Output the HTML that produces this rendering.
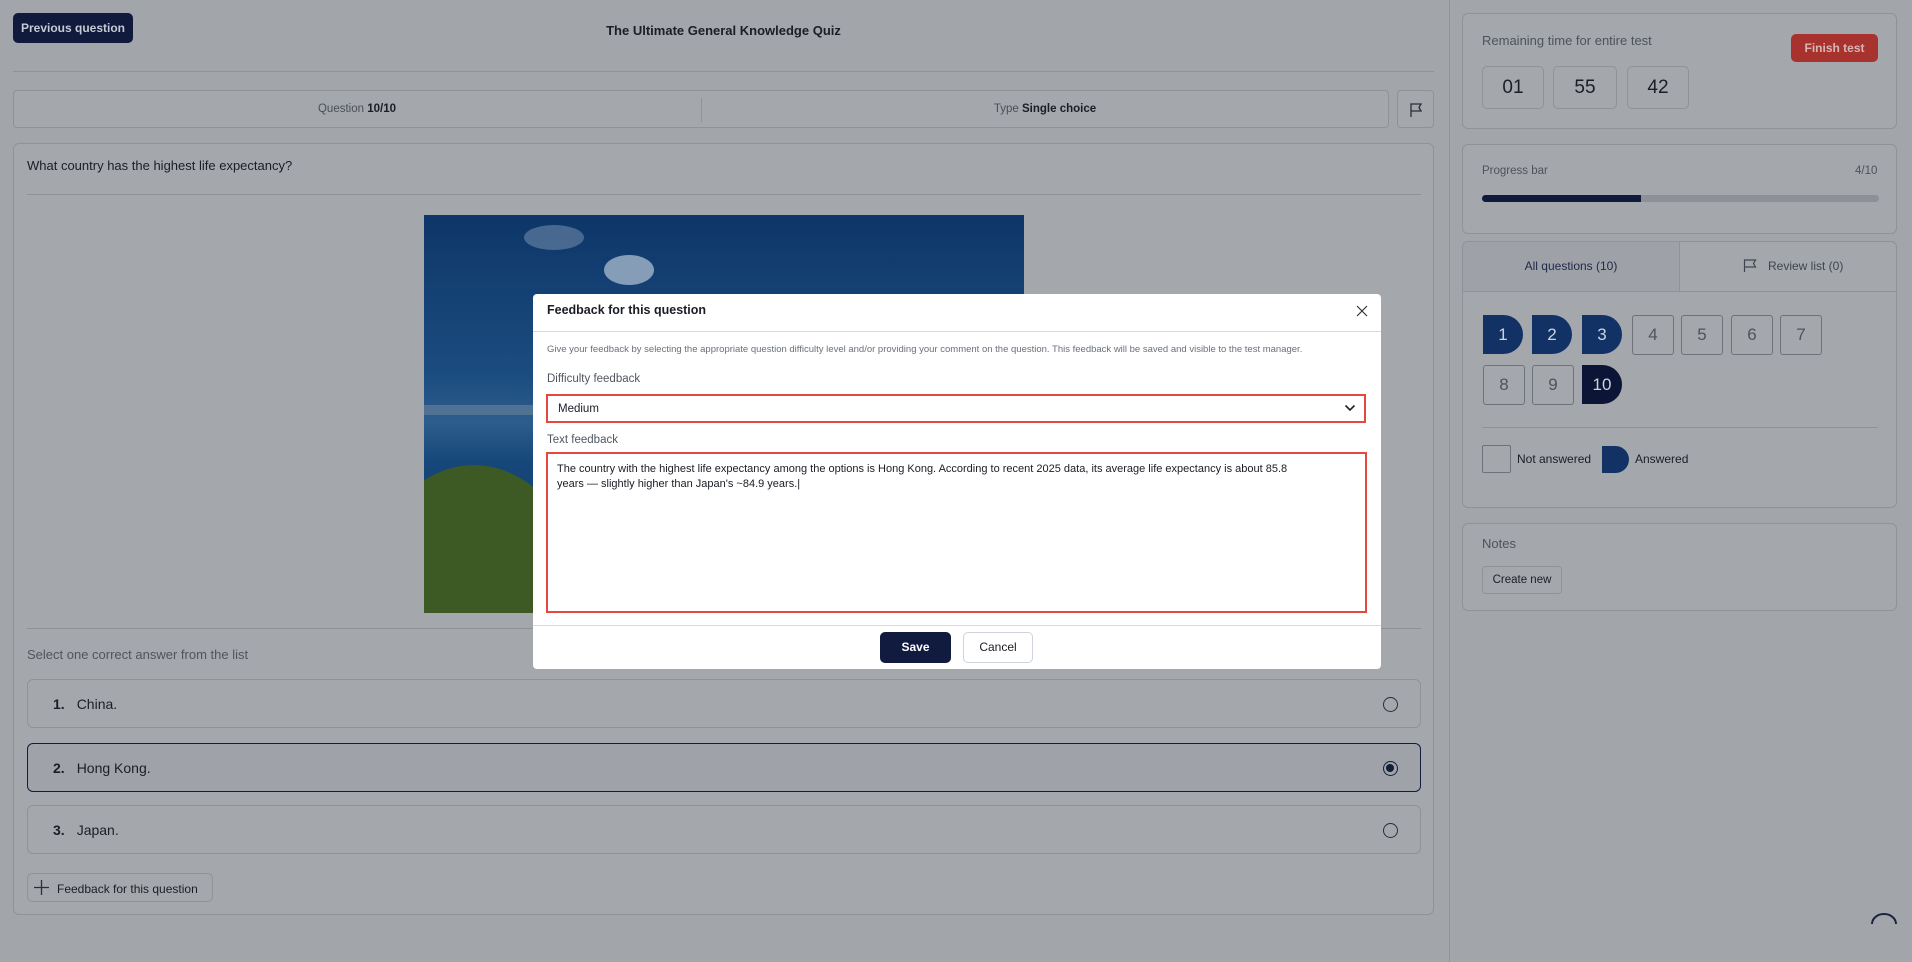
<!DOCTYPE html>
<html><head><meta charset="utf-8"><style>
*{box-sizing:border-box;margin:0;padding:0}
body{width:1912px;height:962px;background:#a2a5aa;font-family:"Liberation Sans",sans-serif;color:#1b1e25;position:relative;overflow:hidden}
.a{position:absolute}
.card{position:absolute;border:1px solid #8f9398;border-radius:6px;background:#a4a7ac}
.nb{position:absolute;width:42px;height:40px;font-size:17px;display:flex;align-items:center;justify-content:center}
.na{background:#123266;color:#cdd3de;border-radius:0 20px 20px 0}
.nn{border:1px solid #6e7279;border-radius:3px;color:#4e535b}
.opt{position:absolute;left:27px;width:1394px;height:49px;border:1px solid #8f9398;border-radius:6px;font-size:14px;padding:16px 0 0 25px}
.opt b{margin-right:12px}
.radio{position:absolute;right:22px;top:17px;width:15px;height:15px;border:1.5px solid #2a2e36;border-radius:50%}
</style></head><body>
<div class="a" style="left:13px;top:13px;width:120px;height:30px;background:#0f1a3d;border-radius:5px;color:#c6cad3;font-size:12px;font-weight:bold;line-height:30px;text-align:center">Previous question</div>
<div class="a" style="left:13px;width:1421px;top:23px;text-align:center;font-size:13px;font-weight:bold">The Ultimate General Knowledge Quiz</div>
<div class="a" style="left:13px;top:71px;width:1421px;height:1px;background:#8f9398"></div>
<div class="card" style="left:13px;top:90px;width:1376px;height:38px;border-radius:4px"></div>
<div class="a" style="left:701px;top:98px;width:1px;height:24px;background:#8f9398"></div>
<div class="a" style="left:13px;width:688px;top:103px;text-align:center;font-size:11.5px;color:#4a4f57">Question <b style="color:#1b1e25">10/10</b></div>
<div class="a" style="left:701px;width:688px;top:103px;text-align:center;font-size:11.5px;color:#4a4f57">Type <b style="color:#1b1e25">Single choice</b></div>
<div class="card" style="left:1397px;top:90px;width:37px;height:38px;border-radius:4px"><svg class="a" style="left:10px;top:11px" width="16" height="16" viewBox="0 0 16 16" fill="none" stroke="#2a2e36" stroke-width="1.3"><path d="M3 15V2h10l-2 3.5 2 3.5H3"/></svg></div>

<div class="card" style="left:13px;top:143px;width:1421px;height:772px"></div>
<div class="a" style="left:27px;top:158px;font-size:13px">What country has the highest life expectancy?</div>
<div class="a" style="left:27px;top:194px;width:1394px;height:1px;background:#8f9398"></div>
<div class="a" style="left:424px;top:215px;width:600px;height:398px;overflow:hidden;background:linear-gradient(180deg,#0e3668 0%,#1b4c80 40%,#2d5d8c 52%,#16477a 62%,#113a66 100%)">
 <div class="a" style="left:0;top:190px;width:120px;height:10px;background:#6a8299;opacity:.6"></div>
 <div class="a" style="left:-80px;top:250px;width:260px;height:400px;border-radius:60% 60% 0 0;background:#3d5a25"></div>
 <div class="a" style="left:100px;top:10px;width:60px;height:25px;border-radius:50%;background:#7f98b4;opacity:.5"></div>
 <div class="a" style="left:180px;top:40px;width:50px;height:30px;border-radius:50%;background:#b7c6d6;opacity:.7"></div>
</div>
<div class="a" style="left:27px;top:628px;width:1394px;height:1px;background:#8f9398"></div>
<div class="a" style="left:27px;top:647px;font-size:13px;color:#50555d">Select one correct answer from the list</div>
<div class="opt" style="top:679px"><b>1.</b>China.<div class="radio"></div></div>
<div class="opt" style="top:743px;border-color:#141d3a;background:#9fa2a8"><b>2.</b>Hong Kong.<div class="radio" style="border-color:#141d3a"><div style="margin:2px;width:8px;height:8px;border-radius:50%;background:#141d3a"></div></div></div>
<div class="opt" style="top:805px"><b>3.</b>Japan.<div class="radio"></div></div>
<div class="a" style="left:27px;top:873px;width:186px;height:29px;border:1px solid #8f9398;border-radius:5px;font-size:12px;padding:8px 0 0 29px">Feedback for this question<svg class="a" style="left:6px;top:6px" width="15" height="15" stroke="#2a2e36" stroke-width="1.3"><path d="M7.5 0v15M0 7.5h15"/></svg></div>

<div class="a" style="left:1449px;top:0;width:1px;height:962px;background:#8f9398"></div>

<div class="card" style="left:1462px;top:13px;width:435px;height:116px"></div>
<div class="a" style="left:1482px;top:33px;font-size:13px;color:#4e535b">Remaining time for entire test</div>
<div class="a" style="left:1791px;top:34px;width:87px;height:28px;background:#a8332e;border-radius:5px;color:#d9b6b4;font-size:12px;font-weight:bold;text-align:center;line-height:28px">Finish test</div>
<div class="a nn" style="left:1482px;top:66px;width:62px;height:43px;font-size:19px;border-color:#8f9398;border-radius:5px;text-align:center;line-height:41px;color:#1b1e25">01</div>
<div class="a nn" style="left:1553px;top:66px;width:64px;height:43px;font-size:19px;border-color:#8f9398;border-radius:5px;text-align:center;line-height:41px;color:#1b1e25">55</div>
<div class="a nn" style="left:1627px;top:66px;width:62px;height:43px;font-size:19px;border-color:#8f9398;border-radius:5px;text-align:center;line-height:41px;color:#1b1e25">42</div>

<div class="card" style="left:1462px;top:144px;width:435px;height:90px"></div>
<div class="a" style="left:1482px;top:165px;font-size:11.5px;color:#4e535b">Progress bar</div>
<div class="a" style="left:1855px;top:165px;font-size:11.5px;color:#4e535b">4/10</div>
<div class="a" style="left:1482px;top:195px;width:397px;height:7px;border-radius:4px;background:#8d9096"></div>
<div class="a" style="left:1482px;top:195px;width:159px;height:7px;border-radius:4px 0 0 4px;background:#0f1a3d"></div>

<div class="card" style="left:1462px;top:241px;width:435px;height:267px"></div>
<div class="a" style="left:1463px;top:242px;width:216px;height:49px;background:#9ea1a7;border-radius:6px 0 0 0"></div>
<div class="a" style="left:1462px;top:291px;width:435px;height:1px;background:#8f9398"></div>
<div class="a" style="left:1679px;top:241px;width:1px;height:50px;background:#8f9398"></div>
<div class="a" style="left:1463px;width:216px;top:259px;text-align:center;font-size:12px;color:#1e2a4a">All questions (10)</div>
<div class="a" style="left:1768px;top:259px;font-size:12px;color:#3f4550">Review list (0)</div>
<svg class="a" style="left:1743px;top:258px" width="14" height="14" fill="none" stroke="#3f4550" stroke-width="1.2"><path d="M1.5 14V2h11l-2 3.5 2 3.5h-11"/></svg>
<div class="nb na" style="left:1483px;top:315px;width:40px;height:39px">1</div>
<div class="nb na" style="left:1532px;top:315px;width:40px;height:39px">2</div>
<div class="nb na" style="left:1582px;top:315px;width:40px;height:39px">3</div>
<div class="nb nn" style="left:1632px;top:315px">4</div>
<div class="nb nn" style="left:1681px;top:315px">5</div>
<div class="nb nn" style="left:1731px;top:315px">6</div>
<div class="nb nn" style="left:1780px;top:315px">7</div>
<div class="nb nn" style="left:1483px;top:365px">8</div>
<div class="nb nn" style="left:1532px;top:365px">9</div>
<div class="nb na" style="left:1582px;top:365px;width:40px;height:39px;background:#0c1535">10</div>
<div class="a" style="left:1482px;top:427px;width:396px;height:1px;background:#8f9398"></div>
<div class="a nn" style="left:1482px;top:445px;width:29px;height:28px;border-radius:2px"></div>
<div class="a" style="left:1517px;top:452px;font-size:12px">Not answered</div>
<div class="a" style="left:1602px;top:446px;width:27px;height:27px;background:#123266;border-radius:0 14px 14px 0"></div>
<div class="a" style="left:1635px;top:452px;font-size:12px">Answered</div>

<div class="card" style="left:1462px;top:523px;width:435px;height:88px"></div>
<div class="a" style="left:1482px;top:536px;font-size:13px;color:#4e535b">Notes</div>
<div class="a" style="left:1482px;top:566px;width:80px;height:28px;border:1px solid #8f9398;border-radius:4px;font-size:11.5px;text-align:center;line-height:26px">Create new</div>
<svg class="a" style="left:1870px;top:912px" width="30" height="20" fill="none" stroke="#1b2440" stroke-width="2"><path d="M2 12a12 10 0 0 1 24 0"/></svg>

<!-- modal -->
<div class="a" style="left:533px;top:294px;width:848px;height:375px;background:#fff;border-radius:4px"></div>
<div class="a" style="left:547px;top:303px;font-size:12.5px;font-weight:bold;color:#1a1d24">Feedback for this question</div>
<svg class="a" style="left:1356px;top:305px" width="12" height="12" stroke="#333" stroke-width="1.2"><path d="M1 1l10 10M11 1L1 11"/></svg>
<div class="a" style="left:533px;top:331px;width:848px;height:1px;background:#d6dbe3"></div>
<div class="a" style="left:547px;top:344px;font-size:9.5px;color:#6a707a;white-space:nowrap">Give your feedback by selecting the appropriate question difficulty level and/or providing your comment on the question. This feedback will be saved and visible to the test manager.</div>
<div class="a" style="left:547px;top:373px;font-size:11.5px;color:#505660">Difficulty feedback</div>
<div class="a" style="left:546px;top:394px;width:820px;height:29px;border:2.5px solid #e5483f;font-size:11.5px;padding:7px 0 0 10px;color:#1a1d24">Medium<svg class="a" style="right:8px;top:7px" width="12" height="10" fill="none" stroke="#222" stroke-width="1.6"><path d="M1.5 2.5l4.5 4.5 4.5-4.5"/></svg></div>
<div class="a" style="left:547px;top:434px;font-size:11.5px;color:#505660">Text feedback</div>
<div class="a" style="left:546px;top:452px;width:821px;height:161px;border:2.5px solid #e5483f;font-size:11px;line-height:14.5px;padding:8px 9px;color:#1a1d24;white-space:nowrap">The country with the highest life expectancy among the options is Hong Kong. According to recent 2025 data, its average life expectancy is about 85.8<br>years — slightly higher than Japan's ~84.9 years.|</div>
<div class="a" style="left:533px;top:625px;width:848px;height:1px;background:#d6dbe3"></div>
<div class="a" style="left:880px;top:632px;width:71px;height:31px;background:#101b3f;border-radius:5px;color:#fff;font-size:12px;font-weight:bold;text-align:center;line-height:31px">Save</div>
<div class="a" style="left:963px;top:632px;width:70px;height:31px;border:1px solid #cfd4db;border-radius:5px;color:#1a1d24;font-size:12px;text-align:center;line-height:29px">Cancel</div>
</body></html>
